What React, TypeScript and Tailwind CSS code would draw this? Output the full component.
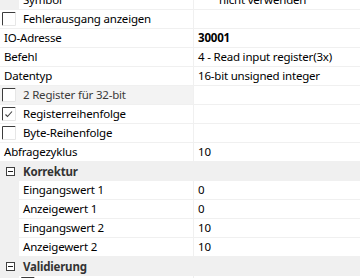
import React from "react";

const font = { fontFamily: '"Noto Sans", "Liberation Sans", sans-serif' };

function CheckBox({ checked }: { checked?: boolean }) {
  return (
    <svg width="14" height="14" viewBox="0 0 14 14" className="shrink-0">
      <rect x="0" y="0" width="14" height="14" fill="#ffffff" />
      <path d="M0.5 13.5 V0.5 H13.5" fill="none" stroke="#3c3c3c" strokeWidth="1" />
      <path d="M13.5 0.5 V13.5 H0.5" fill="none" stroke="#e6e6e6" strokeWidth="1" />
      {checked && (
        <path d="M3.5 7.5 L5.5 9.5 L10 4.5" fill="none" stroke="#404040" strokeWidth="1.1" />
      )}
    </svg>
  );
}

function Minus() {
  return (
    <svg width="9" height="9" viewBox="0 0 9 9" className="shrink-0">
      <rect x="0.5" y="0.5" width="8" height="8" fill="#ffffff" stroke="#404040" />
      <path d="M2 4.5 H7" stroke="#202020" strokeWidth="1" />
    </svg>
  );
}

type RowProps = {
  label: string;
  value?: string;
  indent?: boolean;
  check?: "on" | "off";
  bold?: boolean;
  labelGray?: boolean;
  valueIndent?: boolean;
};

function Row({ label, value, indent, check, bold, labelGray, valueIndent }: RowProps) {
  return (
    <div className="flex h-[19px] shrink-0">
      {indent && <div className="w-[19px] shrink-0 bg-[#f0f0f0]" />}
      <div
        className={`flex items-center border-b border-[#f0f0f0] ${indent ? "w-[174px] pl-[4px]" : "w-[193px]"} ${
          labelGray ? "bg-[#f3f3f3] text-[#3a3a3a]" : "bg-white text-black"
        } ${check ? "pl-[2px]" : indent ? "" : "pl-[4px]"}`}
      >
        {check && <CheckBox checked={check === "on"} />}
        <span className={`${check ? "ml-[7px]" : ""} whitespace-nowrap`}>{label}</span>
      </div>
      <div className="w-px shrink-0 bg-[#f0f0f0]" />
      <div
        className={`flex flex-1 items-center border-b border-[#f0f0f0] bg-white ${valueIndent ? "pl-[25px]" : "pl-[4px]"} ${
          bold ? "font-bold" : ""
        } whitespace-nowrap text-black`}
      >
        {value}
      </div>
    </div>
  );
}

function Category({ label }: { label: string }) {
  return (
    <div className="flex h-[19px] shrink-0 items-center bg-[#f0f0f0] pl-[6px]">
      <Minus />
      <span className="ml-[8px] font-bold text-[#333333]">{label}</span>
    </div>
  );
}

export default function App() {
  return (
    <div
      className="h-[278px] w-[360px] overflow-hidden bg-white text-[11.5px] leading-none tracking-[-0.2px]"
      style={font}
    >
      <div className="mt-[-9px] flex flex-col">
        <Row label="Symbol" value="nicht verwenden" indent valueIndent />
        <Row label="Fehlerausgang anzeigen" check="off" />
        <Row label="IO-Adresse" value="30001" bold />
        <Row label="Befehl" value="4 - Read input register(3x)" />
        <Row label="Datentyp" value="16-bit unsigned integer" />
        <Row label="2 Register für 32-bit" check="off" labelGray />
        <Row label="Registerreihenfolge" check="on" />
        <Row label="Byte-Reihenfolge" check="off" />
        <Row label="Abfragezyklus" value="10" />
        <Category label="Korrektur" />
        <Row label="Eingangswert 1" value="0" indent />
        <Row label="Anzeigewert 1" value="0" indent />
        <Row label="Eingangswert 2" value="10" indent />
        <Row label="Anzeigewert 2" value="10" indent />
        <Category label="Validierung" />
        <div className="flex h-[19px] shrink-0">
          <div className="w-[19px] shrink-0 bg-[#f0f0f0]" />
          <div className="flex w-[174px] items-start bg-white pl-[2px] pt-px">
            <CheckBox />
          </div>
          <div className="w-px shrink-0 bg-[#f0f0f0]" />
          <div className="flex-1 bg-white" />
        </div>
      </div>
    </div>
  );
}
